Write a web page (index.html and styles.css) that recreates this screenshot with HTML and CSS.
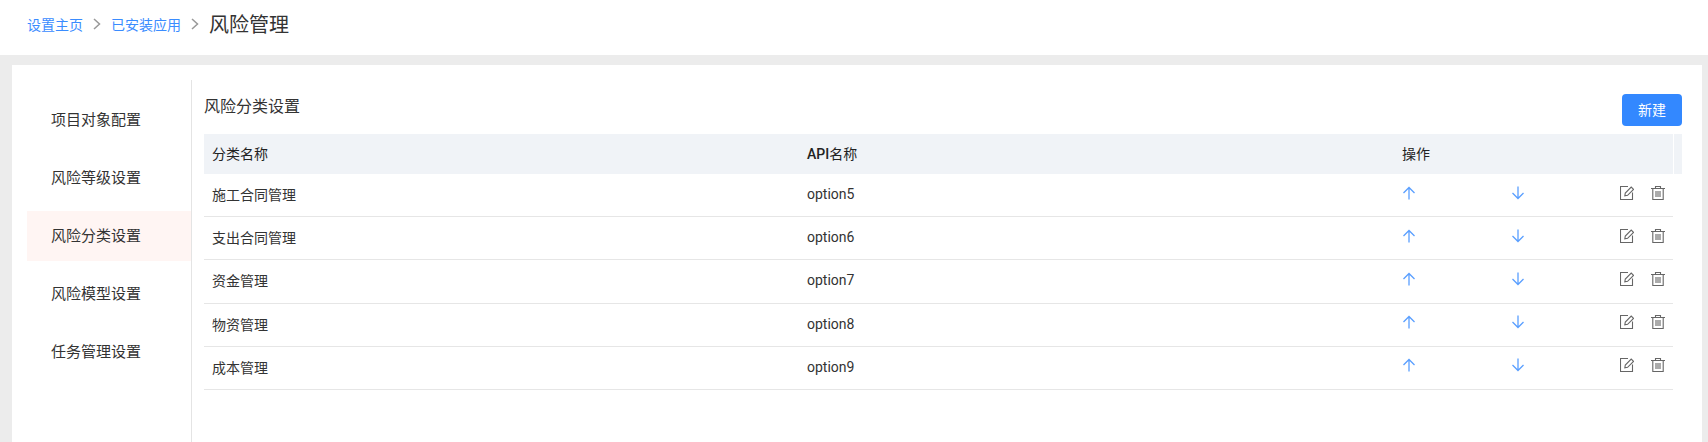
FILE: index.html
```html
<!DOCTYPE html>
<html lang="zh-CN">
<head>
<meta charset="utf-8">
<title>风险管理</title>
<link rel="stylesheet" href="styles.css">
</head>
<body>
<svg class="defs" width="0" height="0" aria-hidden="true">
  <symbol id="i-up" viewBox="0 0 14 14"><path d="M7 13.500V1.500M1.500 7L7 1.500 12.500 7" fill="none" stroke="currentColor" stroke-width="1.300"/></symbol>
  <symbol id="i-down" viewBox="0 0 14 14"><path d="M7 .5v12M1.500 7L7 12.500 12.500 7" fill="none" stroke="currentColor" stroke-width="1.300"/></symbol>
  <symbol id="i-edit" viewBox="0 0 14 14"><path d="M12.500 6.500V13.500H.5V.5H8M4.800 9.800L5.300 7 11.200 1.100 13.500 3.400 7.600 9.300Z" fill="none" stroke="currentColor" stroke-width="1.100"/></symbol>
  <symbol id="i-trash" viewBox="0 0 14 14"><path d="M0 2.500H14M4.500 2.500V.5H9.500V2.500M1.800 2.500V13.500H12.200V2.500M5 5V11M7 5V11M9 5V11" fill="none" stroke="currentColor" stroke-width="1.100"/></symbol>
</svg>
<header class="topbar">
  <nav class="crumbs">
    <a class="crumb-link">设置主页</a>
    <svg class="crumb-sep" viewBox="0 0 8 12"><path d="M1 1l5.500 5L1 11" fill="none" stroke="currentColor" stroke-width="1.500"/></svg>
    <a class="crumb-link">已安装应用</a>
    <svg class="crumb-sep" viewBox="0 0 8 12"><path d="M1 1l5.500 5L1 11" fill="none" stroke="currentColor" stroke-width="1.500"/></svg>
    <span class="crumb-current">风险管理</span>
  </nav>
</header>
<main class="card">
  <aside class="side">
    <div class="side-item">项目对象配置</div>
    <div class="side-item">风险等级设置</div>
    <div class="side-item active">风险分类设置</div>
    <div class="side-item">风险模型设置</div>
    <div class="side-item">任务管理设置</div>
  </aside>
  <section class="content">
    <div class="content-head">
      <h2 class="content-title">风险分类设置</h2>
      <button class="btn-new">新建</button>
    </div>
    <div class="thead">
      <div class="th-cells">
        <div class="cell">分类名称</div>
        <div class="cell"><span class="latin-strong">API</span>名称</div>
        <div class="cell">操作</div>
      </div>
      <div class="gutter"></div>
    </div>
    <div class="row">
      <div class="cell">施工合同管理</div><div class="cell">option5</div>
      <div class="ops"><svg class="ic up"><use href="#i-up"/></svg><svg class="ic down"><use href="#i-down"/></svg><span class="tools"><svg class="ic tool"><use href="#i-edit"/></svg><svg class="ic tool"><use href="#i-trash"/></svg></span></div>
    </div>
    <div class="row">
      <div class="cell">支出合同管理</div><div class="cell">option6</div>
      <div class="ops"><svg class="ic up"><use href="#i-up"/></svg><svg class="ic down"><use href="#i-down"/></svg><span class="tools"><svg class="ic tool"><use href="#i-edit"/></svg><svg class="ic tool"><use href="#i-trash"/></svg></span></div>
    </div>
    <div class="row">
      <div class="cell">资金管理</div><div class="cell">option7</div>
      <div class="ops"><svg class="ic up"><use href="#i-up"/></svg><svg class="ic down"><use href="#i-down"/></svg><span class="tools"><svg class="ic tool"><use href="#i-edit"/></svg><svg class="ic tool"><use href="#i-trash"/></svg></span></div>
    </div>
    <div class="row">
      <div class="cell">物资管理</div><div class="cell">option8</div>
      <div class="ops"><svg class="ic up"><use href="#i-up"/></svg><svg class="ic down"><use href="#i-down"/></svg><span class="tools"><svg class="ic tool"><use href="#i-edit"/></svg><svg class="ic tool"><use href="#i-trash"/></svg></span></div>
    </div>
    <div class="row">
      <div class="cell">成本管理</div><div class="cell">option9</div>
      <div class="ops"><svg class="ic up"><use href="#i-up"/></svg><svg class="ic down"><use href="#i-down"/></svg><span class="tools"><svg class="ic tool"><use href="#i-edit"/></svg><svg class="ic tool"><use href="#i-trash"/></svg></span></div>
    </div>
  </section>
</main>
</body>
</html>
```
FILE: styles.css
```css
* { box-sizing: border-box; }
html, body { margin: 0; height: 100%; }
body {
  background: #ececec;
  font-family: Roboto, "Noto Sans CJK SC", "Noto Sans", sans-serif;
  font-size: 14px;
  color: #333;
  overflow: hidden;
}
.defs { position: absolute; }
.topbar {
  height: 55px;
  background: #fff;
  padding: 0 27px 8px;
  display: flex;
  align-items: center;
}
.crumbs { display: flex; align-items: center; }
.crumb-link { color: #3a8cff; font-size: 14px; }
.crumb-sep { width: 8px; height: 12px; color: #999; margin: 0 10px 0 10px; }
.crumb-current { font-size: 20px; color: #333; }
.card {
  margin: 10px 6px 0 12px;
  height: 377px;
  background: #fff;
  display: flex;
  padding: 15px 20px 0 15px;
}
.side {
  width: 165px;
  border-right: 1px solid #e4e4e4;
  padding-top: 15px;
  flex: none;
}
.side-item {
  height: 50px;
  margin-bottom: 8px;
  padding: 0 0 3px 24px;
  display: flex;
  align-items: center;
  font-size: 15px;
  color: #333;
}
.side-item.active { background: #fff5f3; }
.content { flex: 1; padding-left: 12px; min-width: 0; }
.content-head {
  height: 54px;
  display: flex;
  justify-content: space-between;
  padding-top: 14px;
}
.content-title { margin: 2px 0 0; font-size: 16px; font-weight: 400; line-height: 22px; color: #333; }
.btn-new {
  width: 60px;
  height: 32px;
  border: 0;
  border-radius: 4px;
  background: #3388ff;
  color: #fff;
  font: inherit;
  padding: 0 0 2px;
}
.thead {
  height: 40px;
  background: #f0f3f7;
  display: flex;
  color: #222;
}
.latin-strong { font-weight: 500; }
.th-cells { flex: 1; display: grid; grid-template-columns: 595px 595px 1fr; align-items: center; padding-bottom: 1px; }
.gutter { width: 9px; border-left: 1px solid #fff; }
.row {
  margin-right: 9px;
  height: 43.200px;
  border-bottom: 1px solid #e6e6e6;
  display: grid;
  grid-template-columns: 595px 595px 1fr;
  align-items: center;
}
.cell { padding: 0 0 2px 8px; }
.ops { display: flex; align-items: center; padding: 0 0 5px 8px; }
.ic { width: 14px; height: 14px; display: block; flex: none; }
.up, .down { color: #5a9fff; }
.up { margin-right: 95px; }
.down { margin-right: 95px; }
.tools { display: flex; gap: 17px; color: #666; }
```
